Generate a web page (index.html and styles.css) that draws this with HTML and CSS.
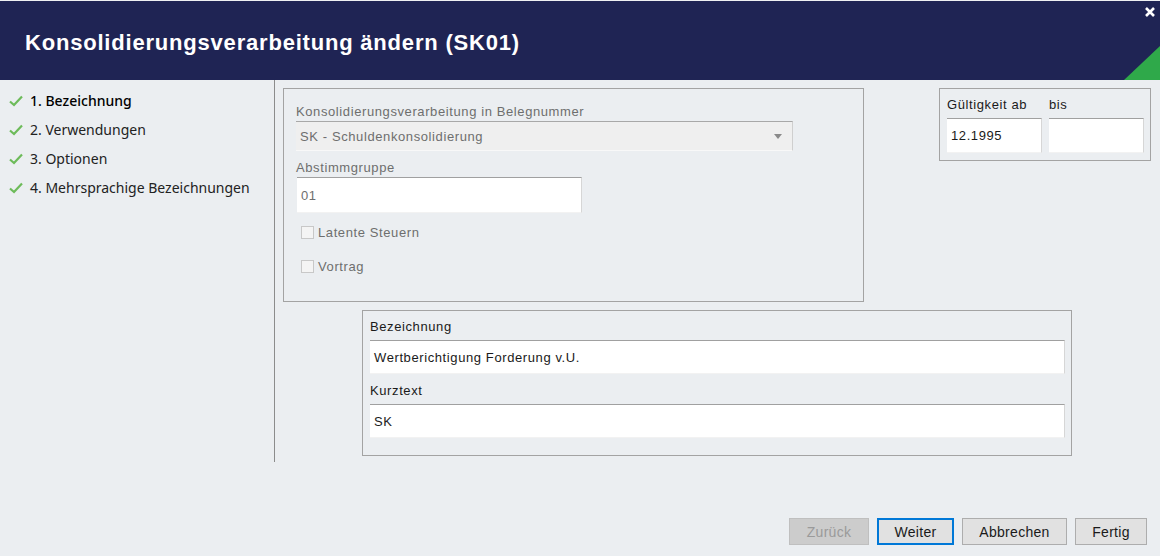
FILE: index.html
```html
<!DOCTYPE html>
<html>
<head>
    <title>Konsolidierungsverarbeitung ändern</title>
    <link rel="stylesheet" href="styles.css">
</head>
<body>
    <div class="dialog">
        <header class="titlebar">
            <h1 class="title">Konsolidierungsverarbeitung ändern (SK01)</h1>
            <svg class="close" width="12" height="12" viewBox="0 0 12 12">
                <path d="M2 2 L10 10 M10 2 L2 10" stroke="#fff" stroke-width="2.6"/>
            </svg>
            <span class="corner"></span>
        </header>

        <div class="dialog-body">
            <nav class="steps">
                <div class="step active">
                    <svg class="check" width="14" height="12" viewBox="0 0 14 12"><path d="M1 6.5 L5 10 L13 1.5" fill="none" stroke="#6dbb5a" stroke-width="2.2"/></svg>
                    <span>1. Bezeichnung</span>
                </div>
                <div class="step">
                    <svg class="check" width="14" height="12" viewBox="0 0 14 12"><path d="M1 6.5 L5 10 L13 1.5" fill="none" stroke="#6dbb5a" stroke-width="2.2"/></svg>
                    <span>2. Verwendungen</span>
                </div>
                <div class="step">
                    <svg class="check" width="14" height="12" viewBox="0 0 14 12"><path d="M1 6.5 L5 10 L13 1.5" fill="none" stroke="#6dbb5a" stroke-width="2.2"/></svg>
                    <span>3. Optionen</span>
                </div>
                <div class="step">
                    <svg class="check" width="14" height="12" viewBox="0 0 14 12"><path d="M1 6.5 L5 10 L13 1.5" fill="none" stroke="#6dbb5a" stroke-width="2.2"/></svg>
                    <span>4. Mehrsprachige Bezeichnungen</span>
                </div>
            </nav>

            <main class="content">
                <div class="top-row">
                    <div class="group main-group">
                        <div class="label disabled">Konsolidierungsverarbeitung in Belegnummer</div>
                        <div class="select">
                            <span>SK - Schuldenkonsolidierung</span>
                            <span class="arrow"></span>
                        </div>
                        <div class="label disabled">Abstimmgruppe</div>
                        <div class="field short-field disabled-text">01</div>
                        <label class="checkrow"><span class="box"></span>Latente Steuern</label>
                        <label class="checkrow"><span class="box"></span>Vortrag</label>
                    </div>

                    <div class="group validity">
                        <div class="validity-col">
                            <div class="label">Gültigkeit ab</div>
                            <div class="field date-field">12.1995</div>
                        </div>
                        <div class="validity-col">
                            <div class="label">bis</div>
                            <div class="field date-field"></div>
                        </div>
                    </div>
                </div>

                <div class="group names">
                    <div class="label">Bezeichnung</div>
                    <div class="field wide-field">Wertberichtigung Forderung v.U.</div>
                    <div class="label">Kurztext</div>
                    <div class="field wide-field">SK</div>
                </div>
            </main>
        </div>

        <footer class="buttons">
            <button class="btn" disabled>Zurück</button>
            <button class="btn focused">Weiter</button>
            <button class="btn">Abbrechen</button>
            <button class="btn">Fertig</button>
        </footer>
    </div>
</body>
</html>
```

FILE: styles.css
```css
body {
    margin: 0;
    background-color: #ebeef1;
    font-family: "Liberation Sans", Arial, sans-serif;
    color: #1a1a1a;
}

.dialog {
    width: 1160px;
    height: 556px;
    overflow: hidden;
}

.titlebar {
    position: relative;
    height: 79px;
    border-top: 1px solid #eef0f2;
    background-color: #1f2454;
    display: flex;
    align-items: center;
}

.title {
    margin: 0 0 0 25px;
    padding-top: 4px;
    color: #fff;
    font-size: 22px;
    font-weight: bold;
    letter-spacing: 0.8px;
}

.close {
    position: absolute;
    top: 5px;
    right: 4px;
}

.corner {
    position: absolute;
    right: 0;
    bottom: 0;
    width: 36px;
    height: 34px;
    background-color: #2fa94a;
    clip-path: polygon(100% 0, 100% 100%, 0 100%);
}

.dialog-body {
    display: flex;
    height: 382px;
}

.steps {
    width: 275px;
    border-right: 1px solid #8c8c8c;
    padding-top: 6px;
    box-sizing: border-box;
    font-family: "Noto Sans", sans-serif;
    font-size: 14px;
    color: #222;
}

.step {
    display: flex;
    align-items: center;
    height: 29px;
    padding-left: 9px;
}

.step.active {
    color: #000;
    font-weight: 500;
}

.check {
    margin-right: 7px;
}

.content {
    flex: 1;
    padding: 8px 9px 0 8px;
}

.top-row {
    display: flex;
    justify-content: space-between;
    align-items: flex-start;
}

.group {
    border: 1px solid #a3a3a3;
    box-sizing: border-box;
}

.label {
    font-size: 13px;
    letter-spacing: 0.6px;
    color: #1a1a1a;
    height: 16px;
}

.label.disabled {
    color: #6e6e6e;
}

.main-group {
    width: 581px;
    height: 214px;
    padding: 15px 0 0 12px;
}

.select {
    width: 497px;
    height: 30px;
    margin-top: 1px;
    box-sizing: border-box;
    background-color: #efefef;
    border-top: 1px solid #a8a8a8;
    border-right: 1px solid #cfcfcf;
    border-bottom: 1px solid #f8f8f8;
    display: flex;
    align-items: center;
    justify-content: space-between;
    padding: 0 10px 0 4px;
    font-size: 13px;
    letter-spacing: 0.6px;
    color: #6e6e6e;
}

.arrow {
    width: 0;
    height: 0;
    border-left: 4px solid transparent;
    border-right: 4px solid transparent;
    border-top: 5px solid #8a8a8a;
}

.main-group .label + .field {
    margin-top: 1px;
}

.main-group .select + .label {
    margin-top: 9px;
}

.field {
    background-color: #fff;
    box-sizing: border-box;
    border-top: 1px solid #a0a0a0;
    border-right: 1px solid #d6d6d6;
    border-bottom: 1px solid #f2f2f2;
    display: flex;
    align-items: center;
    padding-left: 4px;
    font-size: 13px;
    letter-spacing: 0.6px;
    color: #1a1a1a;
}

.short-field {
    width: 285px;
    height: 36px;
    margin-left: 1px;
}

.disabled-text {
    color: #6e6e6e;
}

.checkrow {
    display: flex;
    align-items: center;
    height: 34px;
    padding-left: 5px;
    font-size: 13px;
    letter-spacing: 0.6px;
    color: #6e6e6e;
}

.short-field + .checkrow {
    margin-top: 2px;
}

.box {
    width: 11px;
    height: 11px;
    border: 1px solid #c8c8c8;
    background-color: #f4f4f4;
    margin-right: 4px;
}

.validity {
    width: 212px;
    height: 73px;
    display: flex;
    gap: 7px;
    padding: 8px 0 0 7px;
}

.validity .label {
    margin-bottom: 5px;
}

.date-field {
    width: 95px;
    height: 35px;
}

.names {
    width: 710px;
    height: 146px;
    margin: 8px 0 0 79px;
    padding: 8px 0 0 7px;
}

.names .label {
    margin-bottom: 5px;
}

.wide-field {
    width: 695px;
    height: 34px;
    margin-bottom: 9px;
}

.buttons {
    display: flex;
    justify-content: flex-end;
    gap: 8px;
    padding: 56px 13px 0 0;
}

.btn {
    height: 27px;
    padding: 0;
    box-sizing: border-box;
    background-color: #e1e1e1;
    border: 1px solid #adadad;
    font-family: "Liberation Sans", Arial, sans-serif;
    font-size: 14px;
    letter-spacing: 0.3px;
    color: #1a1a1a;
}

.btn:nth-child(1) {
    width: 80px;
}

.btn:nth-child(2) {
    width: 77px;
}

.btn:nth-child(3) {
    width: 105px;
}

.btn:nth-child(4) {
    width: 72px;
}

.btn:disabled {
    background-color: #cccccc;
    border-color: #bfbfbf;
    color: #9a9a9a;
}

.btn.focused {
    border: 2px solid #0078d7;
}
```
